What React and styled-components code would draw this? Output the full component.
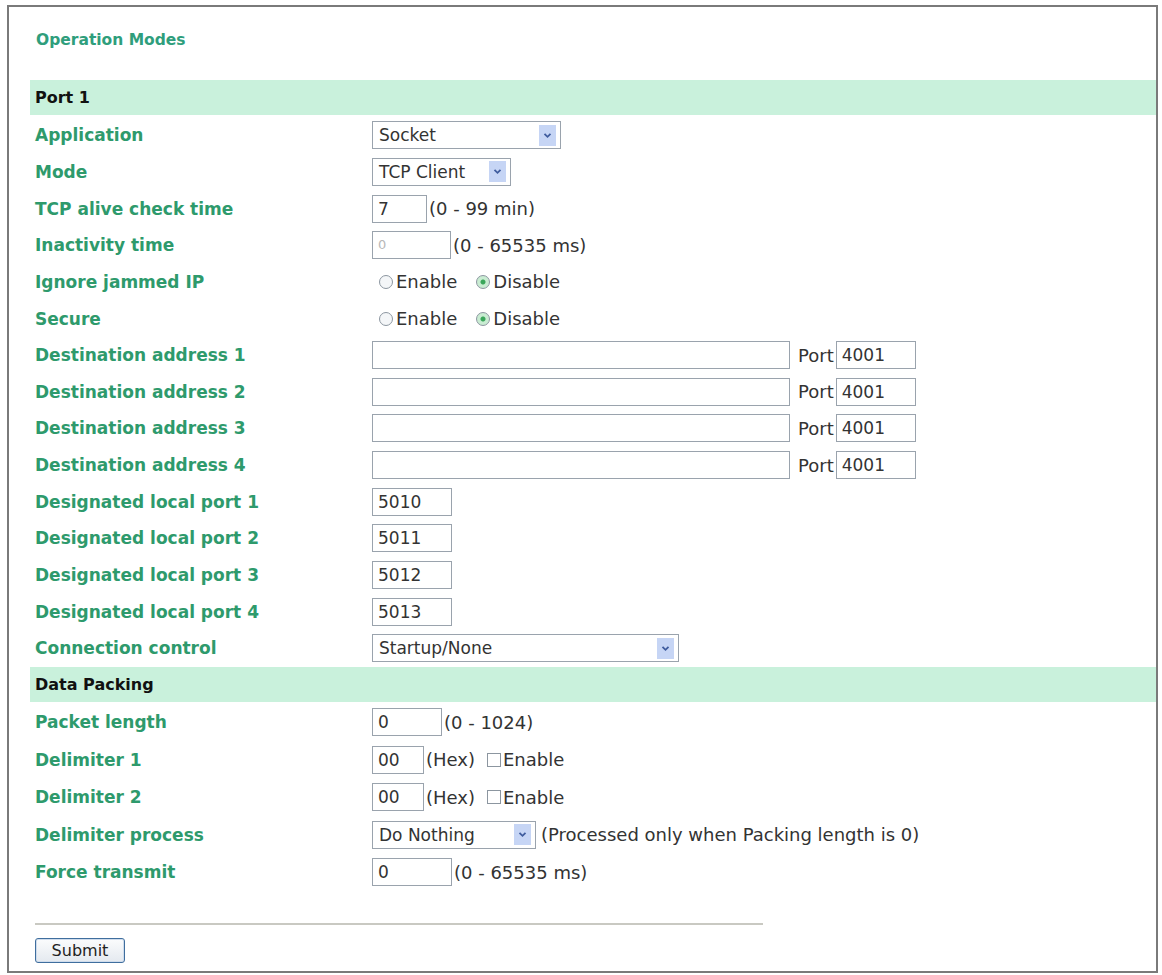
import styled, { createGlobalStyle } from "styled-components";

const GlobalStyle = createGlobalStyle`
  html, body {
    margin: 0;
    background: #ffffff;
  }
`;

const Frame = styled.div`
  box-sizing: border-box;
  margin: 5px 4px 0 7px;
  height: 968px;
  border: 2px solid #7a7a7a;
  padding: 23px 0 0 21px;
  font-family: "DejaVu Sans", Verdana, sans-serif;
`;

const Title = styled.div`
  margin-left: 6px;
  height: 20px;
  line-height: 20px;
  font-size: 15.5px;
  font-weight: bold;
  color: #2f9e7c;
`;

const Band = styled.div`
  margin: ${(p) => p.top || 0}px 0 2px;
  height: 35px;
  line-height: 35px;
  padding-left: 5px;
  background: #c9f1dc;
  font-size: 16px;
  font-weight: bold;
  color: #111;
`;

const Row = styled.div`
  display: grid;
  grid-template-columns: 337px 1fr;
  align-items: center;
  height: ${(p) => p.h || 36.65}px;
  padding-left: 5px;
`;

const Label = styled.div`
  font-size: 17px;
  font-weight: bold;
  color: #2e9a6c;
  white-space: nowrap;
`;

const Field = styled.div`
  display: flex;
  align-items: center;
  font-size: 18px;
  color: #333;
  white-space: nowrap;
`;

const TextBox = styled.div`
  box-sizing: border-box;
  width: ${(p) => p.w}px;
  height: 28px;
  line-height: 26px;
  padding-left: 5px;
  border: 1px solid #9aa3ad;
  background: #fff;
  color: ${(p) => (p.disabled ? "#b8b8b8" : "#333")};
  font-size: ${(p) => (p.disabled ? 13 : 17)}px;
`;

const Hint = styled.span`
  margin-left: ${(p) => p.ml || 2}px;
`;

const SelectBox = styled.div`
  box-sizing: border-box;
  width: ${(p) => p.w}px;
  height: 28px;
  display: flex;
  align-items: center;
  justify-content: space-between;
  padding: 2px 4px 2px 6px;
  border: 1px solid #9aa3ad;
  background: #fff;
  color: #333;
  font-size: 17px;
`;

const Arrow = styled.span`
  width: 17px;
  height: 21px;
  display: flex;
  align-items: center;
  justify-content: center;
  background: #c6d5f5;
`;

const RadioDot = styled.span`
  box-sizing: border-box;
  width: 14px;
  height: 14px;
  border-radius: 50%;
  border: 1px solid #8c96a0;
  background: ${(p) => (p.on ? "radial-gradient(circle, #3aa65a 0 2px, #c9ecd2 3px)" : "#f4f6f8")};
  margin: 0 3px 0 7px;
`;

const Choice = styled.span`
  display: inline-flex;
  align-items: center;
  margin: 0 ${(p) => p.mr || 0}px 0 ${(p) => p.ml || 0}px;
`;

const CheckBox = styled.span`
  box-sizing: border-box;
  width: 14px;
  height: 14px;
  border: 1px solid #8c96a0;
  background: #fff;
  margin-right: 2px;
`;

const PortTag = styled.span`
  margin: 0 2px 0 8px;
`;

const Footer = styled.div`
  margin-top: 32px;
  padding-left: 5px;
`;

const Rule = styled.div`
  width: 728px;
  height: 2px;
  background: #c9c9c2;
`;

const SubmitButton = styled.button`
  margin-top: 13px;
  width: 90px;
  height: 25px;
  padding: 0;
  border: 1px solid #3f6e9e;
  border-radius: 3px;
  background: linear-gradient(#fbfcfd, #e4e9ef);
  box-shadow: inset 0 0 0 1px #cfdcec;
  font-family: "DejaVu Sans", Verdana, sans-serif;
  font-size: 16px;
  color: #222;
`;

function Chevron() {
  return (
    <svg width="9" height="7" viewBox="0 0 9 7">
      <path d="M1.5 1.8 L4.5 4.8 L7.5 1.8" fill="none" stroke="#3f5c9e" strokeWidth="1.8" />
    </svg>
  );
}

function Select({ w, value }) {
  return (
    <SelectBox w={w}>
      <span>{value}</span>
      <Arrow>
        <Chevron />
      </Arrow>
    </SelectBox>
  );
}

function EnableDisable() {
  return (
    <Field>
      <Choice mr={12}>
        <RadioDot />
        Enable
      </Choice>
      <Choice>
        <RadioDot on />
        Disable
      </Choice>
    </Field>
  );
}

export default function App() {
  const destinations = [1, 2, 3, 4];
  const localPorts = ["5010", "5011", "5012", "5013"];

  return (
    <>
      <GlobalStyle />
      <Frame>
        <Title>Operation Modes</Title>

        {/* Port 1 */}
        <Band top={30}>Port 1</Band>
        <Row>
          <Label>Application</Label>
          <Field>
            <Select w={189} value="Socket" />
          </Field>
        </Row>
        <Row>
          <Label>Mode</Label>
          <Field>
            <Select w={139} value="TCP Client" />
          </Field>
        </Row>
        <Row>
          <Label>TCP alive check time</Label>
          <Field>
            <TextBox w={55}>7</TextBox>
            <Hint>(0 - 99 min)</Hint>
          </Field>
        </Row>
        <Row>
          <Label>Inactivity time</Label>
          <Field>
            <TextBox w={79} disabled>
              0
            </TextBox>
            <Hint>(0 - 65535 ms)</Hint>
          </Field>
        </Row>
        <Row>
          <Label>Ignore jammed IP</Label>
          <EnableDisable />
        </Row>
        <Row>
          <Label>Secure</Label>
          <EnableDisable />
        </Row>
        {destinations.map((n) => (
          <Row key={n}>
            <Label>Destination address {n}</Label>
            <Field>
              <TextBox w={418} />
              <PortTag>Port</PortTag>
              <TextBox w={80}>4001</TextBox>
            </Field>
          </Row>
        ))}
        {localPorts.map((p, i) => (
          <Row key={p}>
            <Label>Designated local port {i + 1}</Label>
            <Field>
              <TextBox w={80}>{p}</TextBox>
            </Field>
          </Row>
        ))}
        <Row>
          <Label>Connection control</Label>
          <Field>
            <Select w={307} value="Startup/None" />
          </Field>
        </Row>

        {/* Data Packing */}
        <Band>Data Packing</Band>
        <Row h={37.5}>
          <Label>Packet length</Label>
          <Field>
            <TextBox w={70}>0</TextBox>
            <Hint>(0 - 1024)</Hint>
          </Field>
        </Row>
        {[1, 2].map((n) => (
          <Row key={n} h={37.5}>
            <Label>Delimiter {n}</Label>
            <Field>
              <TextBox w={52}>00</TextBox>
              <Hint>(Hex)</Hint>
              <Choice ml={12}>
                <CheckBox />
                Enable
              </Choice>
            </Field>
          </Row>
        ))}
        <Row h={37.5}>
          <Label>Delimiter process</Label>
          <Field>
            <Select w={164} value="Do Nothing" />
            <Hint ml={5}>(Processed only when Packing length is 0)</Hint>
          </Field>
        </Row>
        <Row h={37.5}>
          <Label>Force transmit</Label>
          <Field>
            <TextBox w={80}>0</TextBox>
            <Hint>(0 - 65535 ms)</Hint>
          </Field>
        </Row>

        <Footer>
          <Rule />
          <SubmitButton>Submit</SubmitButton>
        </Footer>
      </Frame>
    </>
  );
}
